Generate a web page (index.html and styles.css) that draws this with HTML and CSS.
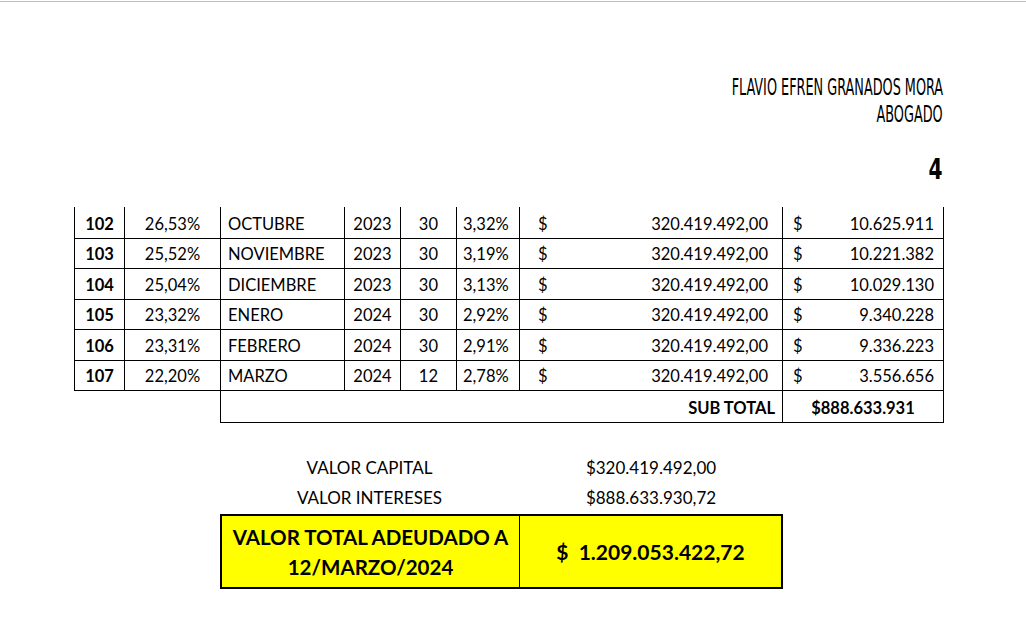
FILE: index.html
```html
<!DOCTYPE html>
<html lang="es">
<head>
<meta charset="utf-8">
<title>Liquidación</title>
<link rel="stylesheet" href="styles.css">
</head>
<body>
<div class="topline"></div>
<div class="page">
  <header class="letterhead">
    <div class="lh-line"><span class="cond">FLAVIO EFREN GRANADOS MORA</span></div>
    <div class="lh-line"><span class="cond">ABOGADO</span></div>
    <div class="pagenum"><span class="cond-b">4</span></div>
  </header>

  <table class="liq">
    <colgroup>
      <col class="c1"><col class="c2"><col class="c3"><col class="c4"><col class="c5"><col class="c6"><col class="c7"><col class="c8">
    </colgroup>
    <tbody>
      <tr><td class="n">102</td><td class="pct">26,53%</td><td class="mes">OCTUBRE</td><td class="yr">2023</td><td class="d">30</td><td class="t">3,32%</td><td><div class="money cap"><span>$</span><span>320.419.492,00</span></div></td><td><div class="money int"><span>$</span><span>10.625.911</span></div></td></tr>
      <tr><td class="n">103</td><td class="pct">25,52%</td><td class="mes">NOVIEMBRE</td><td class="yr">2023</td><td class="d">30</td><td class="t">3,19%</td><td><div class="money cap"><span>$</span><span>320.419.492,00</span></div></td><td><div class="money int"><span>$</span><span>10.221.382</span></div></td></tr>
      <tr><td class="n">104</td><td class="pct">25,04%</td><td class="mes">DICIEMBRE</td><td class="yr">2023</td><td class="d">30</td><td class="t">3,13%</td><td><div class="money cap"><span>$</span><span>320.419.492,00</span></div></td><td><div class="money int"><span>$</span><span>10.029.130</span></div></td></tr>
      <tr><td class="n">105</td><td class="pct">23,32%</td><td class="mes">ENERO</td><td class="yr">2024</td><td class="d">30</td><td class="t">2,92%</td><td><div class="money cap"><span>$</span><span>320.419.492,00</span></div></td><td><div class="money int"><span>$</span><span>9.340.228</span></div></td></tr>
      <tr><td class="n">106</td><td class="pct">23,31%</td><td class="mes">FEBRERO</td><td class="yr">2024</td><td class="d">30</td><td class="t">2,91%</td><td><div class="money cap"><span>$</span><span>320.419.492,00</span></div></td><td><div class="money int"><span>$</span><span>9.336.223</span></div></td></tr>
      <tr><td class="n">107</td><td class="pct">22,20%</td><td class="mes">MARZO</td><td class="yr">2024</td><td class="d">12</td><td class="t">2,78%</td><td><div class="money cap"><span>$</span><span>320.419.492,00</span></div></td><td><div class="money int"><span>$</span><span>3.556.656</span></div></td></tr>
      <tr class="sub"><td class="blank"></td><td class="blank"></td><td class="sublabel" colspan="5">SUB TOTAL</td><td class="subval">$888.633.931</td></tr>
    </tbody>
  </table>

  <section class="summary">
    <div class="srow"><div class="slabel">VALOR CAPITAL</div><div class="sval">$320.419.492,00</div></div>
    <div class="srow"><div class="slabel">VALOR INTERESES</div><div class="sval">$888.633.930,72</div></div>
    <div class="totalbox">
      <div class="tlabel">VALOR TOTAL ADEUDADO A<br>12/MARZO/2024</div>
      <div class="tval">$&nbsp; 1.209.053.422,72</div>
    </div>
  </section>
</div>
</body>
</html>
```

FILE: styles.css
```css
html, body {
  margin: 0;
  padding: 0;
  background: #ffffff;
}
body {
  font-family: Lato, "Open Sans", "Liberation Sans", sans-serif;
  color: #000;
}
.topline {
  margin-top: 1px;
  height: 1px;
  background: #bdbdbd;
}
.page {
  width: 869px;
  margin-left: 74px;
}
.letterhead {
  padding-top: 71px;
  text-align: right;
}
.lh-line {
  height: 27px;
  line-height: 27px;
  font-size: 23px;
}
.cond {
  display: inline-block;
  font-family: "DejaVu Sans", sans-serif;
  font-stretch: condensed;
  transform: scaleX(0.62);
  transform-origin: right center;
}
.pagenum {
  margin-top: 24px;
  font-size: 28px;
  line-height: 34px;
  height: 34px;
}
.cond-b {
  display: inline-block;
  font-family: "DejaVu Sans", sans-serif;
  font-stretch: condensed;
  font-weight: bold;
  transform: scaleX(0.8);
  transform-origin: right center;
}
.liq {
  margin-top: 22px;
  border-collapse: collapse;
  table-layout: fixed;
  width: 869px;
  font-size: 16.5px;
}
.c1 { width: 50px; }
.c2 { width: 96px; }
.c3 { width: 124px; }
.c4 { width: 56px; }
.c5 { width: 56px; }
.c6 { width: 63px; }
.c7 { width: 263px; }
.c8 { width: 161px; }
.liq td {
  border: 1px solid #000;
  height: 27.5px;
  padding: 2px 0 0 0;
  white-space: nowrap;
}
.liq tr:first-child td {
  border-top: none;
  height: 26.5px;
  padding-top: 4px;
}
.liq .n { font-weight: bold; text-align: center; }
.liq .pct { text-align: center; }
.liq .mes { text-align: left; padding-left: 7px; }
.liq .yr { text-align: center; }
.liq .d { text-align: right; padding-right: 18px; }
.liq .t { text-align: left; padding-left: 6px; }
.money {
  display: flex;
  justify-content: space-between;
}
.money.cap { padding: 0 14px 0 18px; }
.money.int { padding: 0 9px 0 10px; }
.liq .sub td { height: 29px; padding-top: 2px; }
.liq .sub .blank {
  border: none;
  border-top: 1px solid #000;
}
.liq .sublabel {
  font-weight: bold;
  text-align: right;
  padding-right: 7px;
}
.liq .subval {
  font-weight: bold;
  text-align: center;
}
.summary {
  margin-left: 146px;
  width: 563px;
  margin-top: 30px;
  font-size: 17px;
}
.srow {
  display: flex;
  height: 30px;
  line-height: 30px;
}
.slabel { width: 299px; text-align: center; }
.sval { flex: 1; text-align: center; }
.totalbox {
  display: flex;
  margin-top: 1px;
  border: 2px solid #000;
  background: #ffff00;
  height: 71px;
  font-weight: bold;
  font-size: 20.5px;
}
.tlabel {
  width: 297px;
  border-right: 1px solid #000;
  display: flex;
  align-items: center;
  justify-content: center;
  text-align: center;
  line-height: 30px;
}
.tval {
  flex: 1;
  display: flex;
  align-items: center;
  justify-content: center;
  font-size: 21px;
}
```
